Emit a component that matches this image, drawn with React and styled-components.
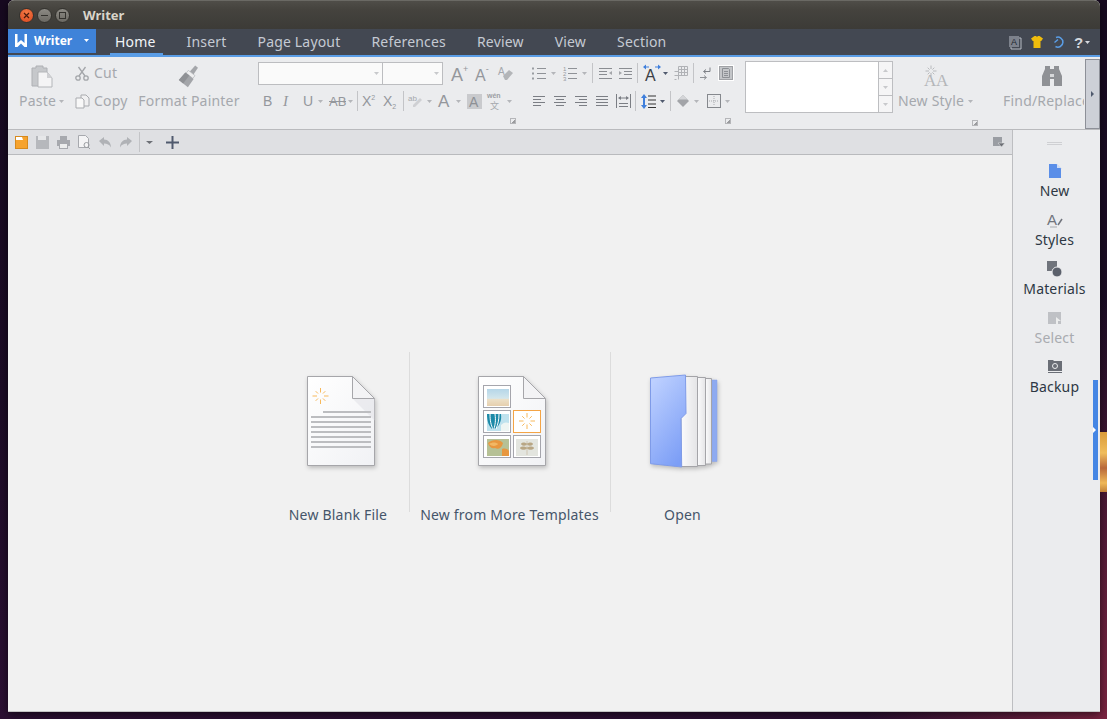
import React from "react";
import styled, { createGlobalStyle } from "styled-components";

const GlobalStyle = createGlobalStyle`
  html, body { margin: 0; padding: 0; height: 100%; overflow: hidden; }
  body { font-family: "Noto Sans", "Open Sans", sans-serif; }
  * { box-sizing: border-box; }
`;

const GREY = "#a5a8ad";
const MID = "#94979c";
const DARK = "#7b7e84";

const Desktop = styled.div`
  position: relative;
  width: 1107px;
  height: 719px;
  padding: 0 7px 7px 8px;
  background:
    radial-gradient(ellipse 240px 420px at 1107px 719px, #7a2440 0%, rgba(122, 36, 64, 0) 100%),
    linear-gradient(180deg, #170a20 0%, #1c0c26 55%, #2c1033 100%);
`;
const Streak = styled.div`
  position: absolute;
  right: 0;
  top: 432px;
  width: 7px;
  height: 60px;
  background: linear-gradient(180deg, #d99a3a 0%, #f0bd5c 35%, #b8683a 60%, #efb858 85%, #c08038 100%);
`;
const Window = styled.div`
  width: 1092px;
  height: 712px;
  display: flex;
  flex-direction: column;
  border-radius: 6px 6px 0 0;
  overflow: hidden;
  background: #f1f1f1;
  box-shadow: 0 2px 8px rgba(0, 0, 0, 0.6);
  border-bottom: 1px solid #c4c4c4;
`;
const TitleBar = styled.div`
  height: 29px;
  flex: none;
  display: flex;
  align-items: center;
  padding-left: 11px;
  background: linear-gradient(180deg, #4f4d48 0%, #45433e 30%, #3c3b37 100%);
  border-top: 1px solid #6a6964;
`;
const Light = styled.div`
  width: 15px;
  height: 15px;
  margin-right: 3px;
  border-radius: 50%;
  display: flex;
  align-items: center;
  justify-content: center;
  background: ${(p) => (p.$close ? "radial-gradient(circle at 50% 30%, #f47a45, #d9471f)" : "linear-gradient(180deg, #8c8a84, #6b6963)")};
  border: 1px solid #33322e;
`;
const Title = styled.span`
  margin-left: 10px;
  font-size: 13px;
  font-weight: 700;
  color: #d9d5ca;
`;
const TabBar = styled.div`
  height: 26px;
  flex: none;
  display: flex;
  background: #434852;
`;
const AppButton = styled.div`
  width: 88px;
  height: 24px;
  display: flex;
  align-items: center;
  padding: 0 0 2px 7px;
  background: #3f83d9;
  color: #fff;
  font-size: 12px;
  font-weight: 700;
`;
const AppLabel = styled.span`
  margin-left: 7px;
  flex: 1;
`;
const Tab = styled.div`
  position: relative;
  padding: 0 15.5px;
  margin-left: ${(p) => p.$ml || 0}px;
  font-size: 14px;
  letter-spacing: 0.18px;
  line-height: 26px;
  color: ${(p) => (p.$active ? "#f2f4f7" : "#c5cad3")};
  white-space: nowrap;
  &::after {
    content: "";
    display: ${(p) => (p.$active ? "block" : "none")};
    position: absolute;
    left: 10px;
    right: 8px;
    bottom: 0;
    height: 2px;
    background: #5a9de6;
  }
`;
const TabTools = styled.div`
  margin-left: auto;
  padding-right: 10px;
  display: flex;
  align-items: center;
`;
const BlueLine = styled.div`
  height: 2px;
  flex: none;
  background: #5a9de6;
`;
const Ribbon = styled.div`
  height: 73px;
  flex: none;
  display: flex;
  background: #ebecee;
  border-bottom: 1px solid #b9babd;
`;
const BigCol = styled.div`
  width: ${(p) => p.$w}px;
  margin-left: ${(p) => p.$ml}px;
  padding-top: 5px;
  display: flex;
  flex-direction: column;
  align-items: ${(p) => (p.$left ? "flex-start" : "center")};
  overflow: hidden;
  flex: none;
`;
const BigIcon = styled.div`
  height: 28px;
  margin-left: ${(p) => p.$ml || 0}px;
  display: flex;
  align-items: center;
  justify-content: center;
`;
const Label = styled.div`
  height: 22px;
  margin-left: ${(p) => p.$ml || 0}px;
  line-height: 22px;
  font-size: 14px;
  letter-spacing: 0.2px;
  color: ${GREY};
  white-space: nowrap;
  display: flex;
  align-items: center;
`;
const Group = styled.div`
  width: ${(p) => p.$w}px;
  margin-left: ${(p) => p.$ml}px;
  padding-top: 5px;
  display: flex;
  flex-direction: column;
  flex: none;
`;
const Row = styled.div`
  height: 22px;
  display: flex;
  align-items: center;
  margin-bottom: 6px;
`;
const ComboBox = styled.div`
  width: ${(p) => p.$w}px;
  height: 23px;
  margin-right: -1px;
  display: flex;
  align-items: center;
  justify-content: flex-end;
  padding-right: 3px;
  background: #fafafa;
  border: 1px solid #bcbdc0;
`;
const Sep = styled.div`
  width: 1px;
  height: 20px;
  margin-left: ${(p) => p.$ml}px;
  background: #c3c4c7;
  flex: none;
`;
const Launcher = styled.div`
  width: 6px;
  height: 6px;
  margin: ${(p) => p.$mt || 0}px ${(p) => p.$mr || 0}px 0 0;
  align-self: flex-end;
  border: 1px solid #b5b6b9;
  background: linear-gradient(135deg, #ebecee 55%, #9a9b9e 55%);
`;
const StyleRow = styled.div`
  display: flex;
  height: 52px;
  margin-top: -1px;
`;
const StyleBox = styled.div`
  width: 134px;
  background: #fff;
  border: 1px solid #bdbec1;
`;
const StyleScroll = styled.div`
  width: 14px;
  display: flex;
  flex-direction: column;
  border: 1px solid #bdbec1;
  border-left: none;
`;
const ScrollButton = styled.div`
  flex: 1;
  display: flex;
  align-items: center;
  justify-content: center;
  background: #f5f5f6;
  & + & {
    border-top: 1px solid #bdbec1;
  }
`;
const StyleSide = styled.div`
  width: 85px;
  display: flex;
  flex-direction: column;
  align-items: center;
  margin-top: 1px;
`;
const Collapse = styled.div`
  width: 15px;
  height: 70px;
  margin: 2px 0 0 1px;
  flex: none;
  display: flex;
  align-items: center;
  justify-content: center;
  background: #cdd0d7;
  border: 1px solid #8d9098;
`;
const Body = styled.div`
  flex: 1;
  display: flex;
  min-height: 0;
`;
const MainCol = styled.div`
  flex: 1;
  display: flex;
  flex-direction: column;
`;
const QuickBar = styled.div`
  height: 25px;
  flex: none;
  display: flex;
  align-items: center;
  padding: 0 7px;
  background: #dfe0e3;
  border-bottom: 1px solid #b9babd;
`;
const Start = styled.div`
  flex: 1;
  display: flex;
  align-items: center;
  justify-content: center;
  padding: 0 0 2px 2px;
  background: #f1f1f1;
`;
const StartItem = styled.div`
  width: ${(p) => p.$w}px;
  height: 160px;
  padding: 23px 0 0 ${(p) => p.$pad || 0}px;
  display: flex;
  flex-direction: column;
  align-items: center;
  border-right: ${(p) => (p.$last ? "none" : "1px solid #dcdcdc")};
`;
const StartArt = styled.div`
  height: 92px;
  filter: drop-shadow(1px 2px 2px rgba(0, 0, 0, 0.22));
`;
const StartLabel = styled.div`
  margin: 38px ${(p) => p.$shift || 0}px 0 0;
  font-size: 14px;
  letter-spacing: 0.2px;
  line-height: 20px;
  color: #45556a;
  white-space: nowrap;
`;
const Sidebar = styled.div`
  position: relative;
  width: 88px;
  flex: none;
  padding: 12px 4px 0 0;
  display: flex;
  flex-direction: column;
  align-items: center;
  background: #ebecee;
  border-left: 1px solid #bdbec1;
`;
const Handle = styled.div`
  width: 15px;
  height: 3px;
  margin-bottom: 17px;
  border-top: 1px solid #cfd0d3;
  border-bottom: 1px solid #cfd0d3;
`;
const SideItem = styled.div`
  height: 49px;
  display: flex;
  flex-direction: column;
  align-items: center;
`;
const SideIcon = styled.div`
  height: 18px;
  display: flex;
  align-items: center;
`;
const SideLabel = styled.div`
  font-size: 14px;
  letter-spacing: 0.15px;
  line-height: 20px;
  margin-top: 1px;
  color: ${(p) => (p.$off ? "#a9abb0" : "#2e3844")};
`;
const Strip = styled.div`
  position: absolute;
  right: 2px;
  top: 250px;
  width: 5px;
  height: 100px;
  display: flex;
  align-items: center;
  background: #4586e4;
`;
const Icon = styled.svg`
  display: block;
  flex: none;
  overflow: visible;
  margin-left: ${(p) => p.$ml || 0}px;
`;

const Svg = ({ w, h, ml, children }) => (
  <Icon width={w} height={h} viewBox={`0 0 ${w} ${h}`} $ml={ml}>
    {children}
  </Icon>
);

const Caret = ({ ml, color = "#b4b6ba", w = 5 }) => (
  <Svg w={w} h={3} ml={ml}>
    <path d={`M0 0h${w}L${w / 2} 3z`} fill={color} />
  </Svg>
);

const Sparkle = ({ cx, cy, r1 = 3.5, r2 = 8, color = "#f7b95c" }) => (
  <g stroke={color} strokeWidth="1">
    {[0, 45, 90, 135, 180, 225, 270, 315].map((a) => {
      const c = Math.cos((a * Math.PI) / 180);
      const s = Math.sin((a * Math.PI) / 180);
      const k = a % 90 === 0 ? 1 : 0.85;
      return <line key={a} x1={cx + c * r1} y1={cy + s * r1} x2={cx + c * r2 * k} y2={cy + s * r2 * k} />;
    })}
  </g>
);

// stacked lines used by the alignment buttons
const Lines = ({ w = 12, h = 11, rows, color = DARK, ml }) => (
  <Svg w={w} h={h} ml={ml}>
    {rows.map(([x1, x2, y], i) => (
      <rect key={i} x={x1} y={y} width={x2 - x1} height="1" fill={color} />
    ))}
  </Svg>
);

const Letter = ({ w, h = 18, ml, size = 14, y = 14, x = 0, color = MID, weight, italic, serif, children, under, strike }) => (
  <Svg w={w} h={h} ml={ml}>
    <text
      x={x}
      y={y}
      fontSize={size}
      fill={color}
      fontWeight={weight}
      fontStyle={italic ? "italic" : "normal"}
      fontFamily={serif ? '"Liberation Serif", serif' : '"Liberation Sans", sans-serif'}
    >
      {children}
    </text>
    {under && <rect x="0" y={y + 2} width={w} height="1" fill={color} />}
    {strike && <rect x="0" y={y - 5} width={w} height="1" fill={color} />}
  </Svg>
);

const PasteIcon = () => (
  <Svg w={23} h={24}>
    <path d="M1 4h4V2h7v2h4v18H1z" fill="#c6c8cb" stroke="#aeb0b4" />
    <path d="M7 8h9l5 6v9H7z" fill="#f4f4f5" stroke="#b4b6b9" />
    <path d="M16 8v6h5z" fill="#cfd0d3" />
  </Svg>
);
const ScissorsIcon = () => (
  <Svg w={14} h={15}>
    <g fill="none" stroke="#a4a6aa" strokeWidth="1.3">
      <circle cx="3" cy="12" r="2.2" />
      <circle cx="11" cy="12" r="2.2" />
      <path d="M4 10 10.5 1M10 10 3.5 1" />
    </g>
  </Svg>
);
const CopyIcon = () => (
  <Svg w={15} h={15}>
    <path d="M6 1h5l3 3v8H6z" fill="#f0f0f1" stroke="#a9abaf" />
    <path d="M1 4h6l2 2v8H1z" fill="#f8f8f8" stroke="#a9abaf" />
  </Svg>
);
const BrushIcon = () => (
  <Svg w={22} h={24}>
    <g transform="rotate(38 11 12)">
      <path d="M9.500 0h3.500l.5 8h-4.500z" fill="#a4a6aa" />
      <rect x="7" y="8" width="8.500" height="3.500" fill="#eeeeef" stroke="#b0b2b5" strokeWidth=".6" />
      <path d="M6 11.500h10.500l.5 10H5.500z" fill="#a3a5a9" />
      <path d="M6 11.500h5v10H5.500z" fill="#8f9195" />
    </g>
  </Svg>
);
const ClearIcon = ({ ml }) => (
  <Svg w={15} h={15} ml={ml}>
    <text x="0" y="9" fontSize="10" fill={GREY} fontFamily='"Liberation Sans", sans-serif'>A</text>
    <path d="M5 10l6-6 4 3-6 7H7z" fill="#b3b5b8" />
  </Svg>
);
const BulletList = ({ ml }) => (
  <Svg w={14} h={13} ml={ml}>
    {[1, 6, 11].map((y) => (
      <g key={y}>
        <rect x="0" y={y - 0.5} width="2" height="2" fill="#9a9da2" />
        <rect x="5" y={y} width="9" height="1" fill="#8f9297" />
      </g>
    ))}
  </Svg>
);
const NumberList = ({ ml }) => (
  <Svg w={14} h={15} ml={ml}>
    {[1, 2, 3].map((n, i) => (
      <g key={n}>
        <text x="0" y={i * 5 + 5} fontSize="6" fill="#96999e" fontFamily='"Liberation Sans", sans-serif'>{n}</text>
        <rect x="5" y={i * 5 + 2} width="9" height="1" fill="#8f9297" />
      </g>
    ))}
  </Svg>
);
const IndentIcon = ({ ml, flip }) => (
  <Svg w={13} h={13} ml={ml}>
    <g fill="#8a8d92">
      <rect x="0" y="1" width="13" height="1" />
      <rect x={flip ? 0 : 5} y="4" width="8" height="1" />
      <rect x={flip ? 0 : 5} y="7" width="8" height="1" />
      <rect x="0" y="11" width="13" height="1" />
    </g>
    <path d={flip ? "M13 4v4l-3-2z" : "M0 4v4l3-2z"} fill="#a4a6aa" />
  </Svg>
);
const FontGrowIcon = ({ ml }) => (
  <Svg w={20} h={18} ml={ml}>
    <path d="M1 3l3 -2.500v2h3v1H4v2z" fill="#3f7fdc" />
    <path d="M19 3l-3 -2.500v2h-3v1h3v2z" fill="#3f7fdc" />
    <text x="3" y="17" fontSize="16" fill="#3c3f44" fontFamily='"Liberation Sans", sans-serif'>A</text>
  </Svg>
);
const TableIcon = ({ ml }) => (
  <Svg w={14} h={14} ml={ml}>
    <path d="M4.500 .5h9v9h-9zM.5 5.500h4v8M7.500 .5v9M10.500 .5v9M4.500 3.500h9M4.500 6.500h9M.5 9.500h4M.5 13.500h2" fill="none" stroke="#b0b2b6" />
  </Svg>
);
const BreakIcon = ({ ml }) => (
  <Svg w={11} h={13} ml={ml}>
    <path d="M10 .5v4H4M6 2.500 3.500 4.500 6 6.500" fill="none" stroke="#7d8086" />
    <path d="M0 10.500h6M4 8.500l2.500 2-2.500 2" fill="none" stroke="#8f9297" />
  </Svg>
);
const PageBoxIcon = ({ ml }) => (
  <Svg w={16} h={16} ml={ml}>
    <rect x="0" y="0" width="16" height="16" fill="#fff" />
    <rect x="1.500" y="1.500" width="13" height="13" fill="#c4c6c9" stroke="#a0a2a6" />
    <path d="M4.500 3.500h6l1 1v8h-7z M6 6.500h4M6 8.500h4M6 10.500h4" fill="none" stroke="#8d9095" />
  </Svg>
);
const HighlightIcon = ({ ml }) => (
  <Svg w={15} h={15} ml={ml}>
    <text x="0" y="7" fontSize="8" fill={GREY} fontFamily='"Liberation Sans", sans-serif'>ab</text>
    <path d="M5 11l7-7 2 2-7 7H5z" fill="#cfd0d3" />
  </Svg>
);
const ShadedA = ({ ml }) => (
  <Svg w={15} h={15} ml={ml}>
    <rect width="15" height="15" fill="#c9cacd" />
    <text x="2" y="13" fontSize="14" fill="#8d9095" fontFamily='"Liberation Sans", sans-serif'>A</text>
  </Svg>
);
const PinyinIcon = ({ ml }) => (
  <Svg w={15} h={18} ml={ml}>
    <text x="0" y="6" fontSize="7" fontWeight="700" fill="#9b9ea3" fontFamily='"Liberation Sans", sans-serif'>wén</text>
    <text x="3" y="17" fontSize="9" fill={GREY} fontFamily='"Noto Sans CJK SC", sans-serif'>文</text>
  </Svg>
);
const DistributedIcon = ({ ml }) => (
  <Svg w={15} h={14} ml={ml}>
    <path d="M.5 0v14M14.500 0v14M3 9.500h9M3 12.500h9M3 4h9" stroke="#7b7e84" fill="none" />
    <path d="M2 4l3-2v4zM13 4l-3-2v4z" fill="#7b7e84" />
  </Svg>
);
const LineSpacingIcon = ({ ml }) => (
  <Svg w={15} h={15} ml={ml}>
    <path d="M3 0l3 4H4v7h2l-3 4-3-4h2V4H0z" fill="#3f7fdc" />
    <path d="M7 2h8M7 6h8M7 10h8M7 13.500h8" stroke="#333" fill="none" />
  </Svg>
);
const FillIcon = ({ ml }) => (
  <Svg w={14} h={13} ml={ml}>
    <path d="M1 6l6-6 6 6-6 6z" fill="#a2a4a8" />
    <path d="M2.500 4.500 7 0l4.500 4.500z" fill="#d4d5d8" />
  </Svg>
);
const BorderIcon = ({ ml }) => (
  <Svg w={14} h={14} ml={ml}>
    <rect x=".5" y=".5" width="13" height="13" fill="none" stroke="#85888d" />
    <path d="M7 2v10M2 7h10" stroke="#a9abaf" strokeDasharray="1 1" />
  </Svg>
);
const NewStyleIcon = () => (
  <Svg w={24} h={22}>
    <Sparkle cx={7} cy={6} r1={2} r2={5.500} color="#b8babd" />
    <text x="0" y="21" fontSize="17" fill="#b4b6b9" fontFamily='"Liberation Serif", serif'>A</text>
    <text x="12" y="21" fontSize="17" fill="#b4b6b9" fontFamily='"Liberation Serif", serif'>A</text>
  </Svg>
);
const BinocularsIcon = () => (
  <Svg w={22} h={22}>
    <path d="M4 1h5v3h4V1h5v3l3 7v10h-8v-7H9v7H1V11l3-7z" fill="#8f9195" />
    <path d="M9 9h4v3H9z" fill="#d7d8da" />
  </Svg>
);

const QuickIcons = () => (
  <>
    <Svg w={13} h={13}>
      <rect x=".5" y=".5" width="12" height="12" fill="#f6a32e" stroke="#d78a1e" />
      <path d="M1 1h6l1 3H1z" fill="#fff" />
    </Svg>
    <Svg w={13} h={13} ml={8}>
      <path d="M0 0h13v13H0z" fill="#b6b8bc" />
      <rect x="2" y="0" width="8" height="4" fill="#e6e7e9" />
    </Svg>
    <Svg w={13} h={13} ml={8}>
      <path d="M3 0h7v4H3zM0 4h13v6h-2v3H2v-3H0z" fill="#a7a9ae" />
      <rect x="3" y="8" width="7" height="4" fill="#eceded" />
    </Svg>
    <Svg w={13} h={14} ml={8}>
      <path d="M.5 .5h7l3 3v9h-10z" fill="#f4f4f5" stroke="#a7a9ae" />
      <circle cx="8.500" cy="10" r="2.500" fill="none" stroke="#9a9da1" />
      <path d="M10 12l2 2" stroke="#9a9da1" />
    </Svg>
    <Svg w={12} h={11} ml={8}>
      <path d="M0 4l5-4v2.500c4 0 7 3 7 8-1.500-3-4-4-7-4V9z" fill="#b0b2b6" />
    </Svg>
    <Svg w={12} h={11} ml={9}>
      <path d="M12 4L7 0v2.500c-4 0-7 3-7 8 1.500-3 4-4 7-4V9z" fill="#b0b2b6" />
    </Svg>
    <Sep $ml={7} />
    <Caret ml={6} w={7} color="#6d7076" />
    <Svg w={13} h={13} ml={13}>
      <path d="M5.500 0h2v5.500H13v2H7.500V13h-2V7.500H0v-2h5.500z" fill="#505a6e" />
    </Svg>
  </>
);

const PageGradient = ({ id }) => (
  <linearGradient id={id} x1="0" y1="0" x2="1" y2="1">
    <stop offset="0" stopColor="#fff" />
    <stop offset="1" stopColor="#f1f2f5" />
  </linearGradient>
);

const BlankDoc = () => (
  <Svg w={72} h={92}>
    <defs>
      <PageGradient id="pg" />
    </defs>
    <path d="M2.500 1.500h45l22 22v67h-67z" fill="url(#pg)" stroke="#a6a6aa" />
    <path d="M47.500 23.500l22 22v-22z" fill="#e3e3e8" opacity=".6" />
    <path d="M47.500 1.500v22h22z" fill="#f3f3f5" stroke="#a6a6aa" />
    <Sparkle cx={15.500} cy={21} />
    <rect x="18" y="36" width="48" height="2" fill="#bcbdc0" />
    {[41, 46, 51, 56, 61, 66, 71].map((y) => (
      <rect key={y} x="6" y={y} width="60" height="2" fill="#bcbdc0" />
    ))}
  </Svg>
);

const TemplateDoc = () => (
  <Svg w={72} h={92}>
    <defs>
      <PageGradient id="pg2" />
      <linearGradient id="sky" x1="0" y1="0" x2="0" y2="1">
        <stop offset="0" stopColor="#b5d6e8" />
        <stop offset=".55" stopColor="#d3e6ec" />
        <stop offset=".6" stopColor="#ece0c8" />
        <stop offset="1" stopColor="#e6cfae" />
      </linearGradient>
    </defs>
    <path d="M2.500 1.500h45l22 22v67h-67z" fill="url(#pg2)" stroke="#a6a6aa" />
    <path d="M47.500 1.500v22h22z" fill="#f3f3f5" stroke="#a6a6aa" />
    <g fill="#fff" stroke="#a5a5ac">
      <rect x="7.500" y="10.500" width="27" height="22" />
      <rect x="7.500" y="35.500" width="27" height="22" />
      <rect x="7.500" y="60.500" width="27" height="22" />
      <rect x="37.500" y="60.500" width="27" height="22" />
      <rect x="37.500" y="35.500" width="27" height="22" stroke="#f4a445" />
    </g>
    <rect x="11" y="14" width="22" height="17" fill="url(#sky)" />
    <rect x="11" y="39" width="22" height="17" fill="#bfe2ee" />
    <path d="M11 39h14c1 7-2 12-6 15h-3c-3-3-5-7-5-15z" fill="#1d8aa8" />
    <path d="M14 39c0 7 1 11 3 15M19 39c1 7 0 11-1 15M23 39c0 6-1 10-3 15" stroke="#fff" fill="none" />
    <path d="M25 50c3-3 5-3 8-2v8h-8z" fill="#eef5f3" />
    <rect x="11" y="64" width="22" height="17" fill="#b6c196" />
    <path d="M12 68c4-4 12-4 15 0-1 5-5 7-8 5-3 1-6-1-7-5zM26 74c3-1 6 0 7 2v5h-7z" fill="#e8973f" />
    <path d="M13 69c3-2 7-2 9 0-1 2-6 3-9 0z" fill="#f2b865" />
    <rect x="40" y="64" width="22" height="17" fill="#e3e5df" />
    <path d="M51 66v14M51 69c-3-2-5-1-6 0 2 2 4 2 6 0zM51 69c3-2 5-1 6 0-2 2-4 2-6 0zM51 73c-3-2-6-1-7 0 2 2 5 2 7 0zM51 73c3-2 6-1 7 0-2 2-5 2-7 0z" fill="#b8a684" stroke="#b8a684" strokeWidth=".5" />
    <Sparkle cx={51} cy={46} r1={3.500} r2={8} />
  </Svg>
);

const FolderStack = () => (
  <Svg w={72} h={92}>
    <defs>
      <linearGradient id="fold" x1="0.2" y1="0" x2="0.7" y2="1">
        <stop offset="0" stopColor="#bdd0ff" />
        <stop offset="1" stopColor="#7c9ef6" />
      </linearGradient>
      <linearGradient id="sheet" x1="0" y1="0" x2="1" y2="0">
        <stop offset="0" stopColor="#fbfbfc" />
        <stop offset="1" stopColor="#e4e4e6" />
      </linearGradient>
    </defs>
    <path d="M64 5h5v81.500h-5z" fill="#8eaaf0" stroke="#87a2e8" strokeWidth=".5" />
    <path d="M57.500 3.500h6v85.500h-6z" fill="url(#sheet)" stroke="#a4a4a8" />
    <path d="M49.500 2.500h8v88h-8z" fill="url(#sheet)" stroke="#a4a4a8" />
    <path d="M33 1.500h16.500v90H33z" fill="url(#sheet)" stroke="#a4a4a8" />
    <path d="M2.500 3l35-3 .5 38.500-5 5 .7 48.500-31.200-3.300z" fill="url(#fold)" stroke="#7f9be8" />
  </Svg>
);

const tabs = ["Insert", "Page Layout", "References", "Review", "View", "Section"];

const App = () => (
  <>
    <GlobalStyle />
    <Desktop>
      <Streak />
      <Window>
        <TitleBar>
          <Light $close>
            <Svg w={7} h={7}>
              <path d="M1 1l5 5M6 1l-5 5" stroke="#4b1a0c" strokeWidth="1.200" />
            </Svg>
          </Light>
          <Light>
            <Svg w={7} h={7}>
              <path d="M0 3.500h7" stroke="#33322e" strokeWidth="1.200" />
            </Svg>
          </Light>
          <Light>
            <Svg w={7} h={7}>
              <rect x=".5" y=".5" width="6" height="6" fill="none" stroke="#33322e" />
            </Svg>
          </Light>
          <Title>Writer</Title>
        </TitleBar>

        <TabBar>
          <AppButton>
            <Svg w={12} h={13}>
              <path d="M0 0h2.500v9L6 6l3.500 3V0H12v13H9.500L6 9.500 2.500 13H0z" fill="#fff" />
            </Svg>
            <AppLabel>Writer</AppLabel>
            <Svg w={12} h={3}>
              <path d="M0 0h5L2.500 3z" fill="#fff" />
            </Svg>
          </AppButton>
          <Tab $active $ml={3.500}>Home</Tab>
          {tabs.map((t) => (
            <Tab key={t}>{t}</Tab>
          ))}
          <TabTools>
            <Svg w={12} h={13}>
              <path d="M2 2h10v11H2z" fill="none" stroke="#b8bcc4" />
              <rect x="0" y="0" width="10" height="11" fill="#7d828c" />
              <text x="2" y="9" fontSize="9" fill="#20242c" fontFamily='"Liberation Sans", sans-serif'>A</text>
            </Svg>
            <Svg w={12} h={12} ml={10}>
              <path d="M3.500 0h1.500c.5 1 1.500 1 2 0h1.500L12 2.500 10.300 5H9.500v7h-7V5h-.8L0 2.500z" fill="#f0bd0c" />
            </Svg>
            <Svg w={11} h={12} ml={10}>
              <path d="M3 1.500A5 5 0 1 1 2.500 10.500M1.500 6.500 5 3.500" fill="none" stroke="#5a9de6" strokeWidth="1.500" />
            </Svg>
            <Letter w={10} h={18} ml={10} size={15} y={15} color="#d5d8de" weight="700">?</Letter>
            <Caret ml={1} color="#d5d8de" />
          </TabTools>
        </TabBar>
        <BlueLine />

        <Ribbon>
          <BigCol $w={47} $ml={10}>
            <BigIcon $ml={1}><PasteIcon /></BigIcon>
            <Label>Paste<Caret ml={3} /></Label>
          </BigCol>
          <Group $w={54} $ml={10}>
            <Row>
              <ScissorsIcon />
              <Label $ml={5}>Cut</Label>
            </Row>
            <Row>
              <CopyIcon />
              <Label $ml={4}>Copy</Label>
            </Row>
          </Group>
          <BigCol $w={102} $ml={9}>
            <BigIcon $ml={0}><BrushIcon /></BigIcon>
            <Label>Format Painter</Label>
          </BigCol>

          <Group $w={258} $ml={18}>
            <Row>
              <ComboBox $w={125}><Caret color="#c8c9cc" /></ComboBox>
              <ComboBox $w={61}><Caret color="#c8c9cc" /></ComboBox>
              <Letter w={18} ml={9} size={18} y={17}>A<tspan fontSize="9" dy="-9">+</tspan></Letter>
              <Letter w={16} ml={6} size={16} y={17}>A<tspan fontSize="9" dy="-9">-</tspan></Letter>
              <ClearIcon ml={7} />
            </Row>
            <Row>
              <Letter w={10} ml={5}>B</Letter>
              <Letter w={9} ml={10} size={15} italic serif>I</Letter>
              <Letter w={10} ml={11}>U</Letter>
              <Caret ml={5} />
              <Letter w={17} ml={6} strike size={13}>AB</Letter>
              <Caret ml={2} />
              <Sep $ml={4} />
              <Letter w={15} ml={4}>X<tspan fontSize="7" dy="-6">2</tspan></Letter>
              <Letter w={15} ml={6}>X<tspan fontSize="7" dy="3">2</tspan></Letter>
              <Sep $ml={5} />
              <HighlightIcon ml={4} />
              <Caret ml={4} />
              <Letter w={13} ml={6} size={17} y={15}>A</Letter>
              <Caret ml={5} />
              <ShadedA ml={6} />
              <PinyinIcon ml={5} />
              <Caret ml={5} />
            </Row>
            <Launcher />
          </Group>

          <Group $w={200} $ml={16}>
            <Row>
              <BulletList />
              <Caret ml={5} />
              <NumberList ml={7} />
              <Caret ml={5} />
              <Sep $ml={5} />
              <IndentIcon ml={6} flip />
              <IndentIcon ml={7} />
              <Sep $ml={5} />
              <FontGrowIcon ml={4} />
              <Caret ml={1} color="#505a6e" />
              <TableIcon ml={6} />
              <Sep $ml={5} />
              <BreakIcon ml={6} />
              <PageBoxIcon ml={7} />
            </Row>
            <Row>
              <Lines ml={1} rows={[[0, 12, 0], [0, 8, 3], [0, 12, 6], [0, 8, 9]]} />
              <Lines ml={9} rows={[[0, 12, 0], [2, 10, 3], [0, 12, 6], [2, 10, 9]]} />
              <Lines ml={9} rows={[[0, 12, 0], [4, 12, 3], [0, 12, 6], [4, 12, 9]]} />
              <Lines ml={9} rows={[[0, 12, 0], [0, 12, 3], [0, 12, 6], [0, 12, 9]]} />
              <DistributedIcon ml={8} />
              <Sep $ml={4} />
              <LineSpacingIcon ml={5} />
              <Caret ml={4} color="#505a6e" />
              <Sep $ml={5} />
              <FillIcon ml={5} />
              <Caret ml={4} />
              <BorderIcon ml={8} />
              <Caret ml={4} />
            </Row>
            <Launcher $mr={1} />
          </Group>

          <Group $w={233} $ml={13}>
            <StyleRow>
              <StyleBox />
              <StyleScroll>
                <ScrollButton><Svg w={5} h={3}><path d="M0 3h5L2.500 0z" fill="#c8c9cc" /></Svg></ScrollButton>
                <ScrollButton><Caret color="#c8c9cc" /></ScrollButton>
                <ScrollButton><Caret color="#c8c9cc" /></ScrollButton>
              </StyleScroll>
              <StyleSide>
                <BigIcon><NewStyleIcon /></BigIcon>
                <Label>New Style<Caret ml={4} /></Label>
              </StyleSide>
            </StyleRow>
            <Launcher $mt={7} />
          </Group>

          <BigCol $w={81} $ml={25} $left>
            <BigIcon $ml={38}><BinocularsIcon /></BigIcon>
            <Label>Find/Replace</Label>
          </BigCol>
          <Collapse>
            <Svg w={3} h={6}><path d="M0 0l3 3-3 3z" fill="#505a6e" /></Svg>
          </Collapse>
        </Ribbon>

        <Body>
          <MainCol>
            <QuickBar>
              <QuickIcons />
              <Svg w={12} h={10} ml={814}>
                <rect width="9" height="9" fill="#9a9da3" />
                <path d="M5 6h7L8.500 10z" fill="#6d7076" stroke="#dfe0e3" strokeWidth=".6" />
              </Svg>
            </QuickBar>
            <Start>
              <StartItem $w={142} $pad={6}>
                <StartArt><BlankDoc /></StartArt>
                <StartLabel $shift={6}>New Blank File</StartLabel>
              </StartItem>
              <StartItem $w={201} $pad={4}>
                <StartArt><TemplateDoc /></StartArt>
                <StartLabel $shift={4}>New from More Templates</StartLabel>
              </StartItem>
              <StartItem $w={144} $pad={2} $last>
                <StartArt><FolderStack /></StartArt>
                <StartLabel $shift={2}>Open</StartLabel>
              </StartItem>
            </Start>
          </MainCol>
          <Sidebar>
            <Handle />
            <SideItem>
              <SideIcon>
                <Svg w={12} h={14}><path d="M0 0h7.500L12 4.500V14H0z" fill="#5a8ee8" /><path d="M8 0v4h4z" fill="#cfdcf5" /></Svg>
              </SideIcon>
              <SideLabel>New</SideLabel>
            </SideItem>
            <SideItem>
              <SideIcon>
                <Svg w={16} h={16}>
                  <text x="0" y="13" fontSize="15" fill="#70747c" fontFamily='"Liberation Sans", sans-serif'>A</text>
                  <path d="M11 13l4-6" stroke="#70747c" strokeWidth="1.500" />
                  <path d="M3 15h7" stroke="#a8abb0" />
                </Svg>
              </SideIcon>
              <SideLabel>Styles</SideLabel>
            </SideItem>
            <SideItem>
              <SideIcon>
                <Svg w={15} h={16}>
                  <rect width="10" height="10" fill="#70747c" />
                  <circle cx="10" cy="11" r="5" fill="#5c616c" stroke="#ebecee" />
                </Svg>
              </SideIcon>
              <SideLabel>Materials</SideLabel>
            </SideItem>
            <SideItem>
              <SideIcon>
                <Svg w={13} h={12}>
                  <rect width="13" height="12" fill="#bfc1c5" />
                  <path d="M8 5l5 4-3 0v3H8z" fill="#eceded" />
                </Svg>
              </SideIcon>
              <SideLabel $off>Select</SideLabel>
            </SideItem>
            <SideItem>
              <SideIcon>
                <Svg w={14} h={14}>
                  <path d="M0 0h5l1 1h8v10H0z" fill="#6a6e76" />
                  <circle cx="7" cy="6" r="2.500" fill="none" stroke="#ebecee" />
                  <path d="M0 12.500h14" stroke="#6a6e76" />
                </Svg>
              </SideIcon>
              <SideLabel>Backup</SideLabel>
            </SideItem>
            <Strip>
              <Svg w={3} h={6}><path d="M0 0l3 3-3 3z" fill="#fff" /></Svg>
            </Strip>
          </Sidebar>
        </Body>
      </Window>
    </Desktop>
  </>
);

export default App;
